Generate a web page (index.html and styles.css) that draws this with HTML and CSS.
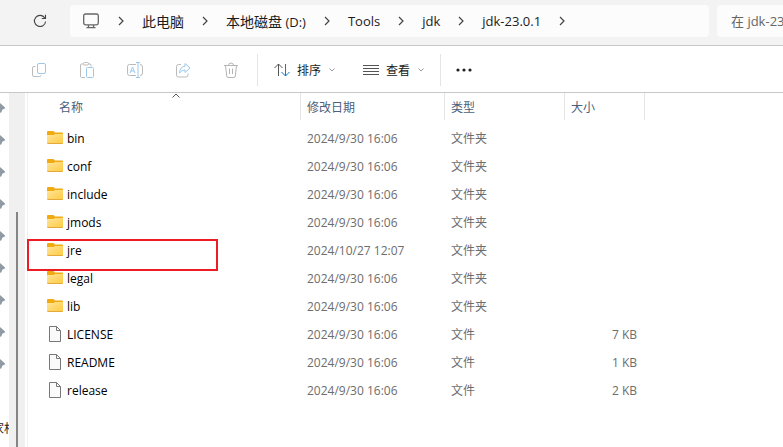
FILE: index.html
```
<!DOCTYPE html>
<html lang="zh-CN">
<head>
    <meta charset="UTF-8">
    <meta name="viewport" content="width=device-width, initial-scale=1.0">
    <title>jdk-23.0.1</title>
    <link rel="stylesheet" href="styles.css">
</head>
<body>
    <!-- shared icons -->
    <svg class="sprite" aria-hidden="true">
        <symbol id="chevron" viewBox="0 0 8 10"><path d="M2 1 L6 5 L2 9" fill="none" stroke="#444" stroke-width="1.2"/></symbol>
        <symbol id="down" viewBox="0 0 8 6"><path d="M1.500 1.500 L4 4 L6.500 1.500" fill="none" stroke="#999" stroke-width="1"/></symbol>
        <symbol id="folder" viewBox="0 0 16 16">
            <path d="M0 2 Q0 1 1 1 H6.500 L8 2.500 H15 Q16 2.500 16 3.500 V8 H0 Z" fill="#f0ab12"/>
            <path d="M0 5 H6.500 L8 4 H16 V13 Q16 14 15 14 H1 Q0 14 0 13 Z" fill="url(#folderFill)"/>
            <path d="M.5 13.500 H15.500" stroke="#e3a93a" stroke-width="1"/>
        </symbol>
        <symbol id="file" viewBox="0 0 16 16">
            <path d="M2.500 .5 H9.500 L13.500 4.500 V15.500 H2.500 Z" fill="#fafafa" stroke="#777"/>
            <path d="M9.500 .5 V4.500 H13.500" fill="none" stroke="#777"/>
        </symbol>
        <symbol id="pin" viewBox="0 0 12 12"><path d="M6 1 L11 5.500 V6.500 L8.500 7.500 L7 11 L5.500 10 L3 8 L0 11 L2 7 L1 5 L5 3.500 Z" fill="#8f9aa3"/></symbol>
        <defs>
            <linearGradient id="folderFill" x1="0" y1="0" x2="1" y2="1">
                <stop offset="0" stop-color="#ffe69b"/>
                <stop offset="1" stop-color="#fdc93f"/>
            </linearGradient>
        </defs>
    </svg>

    <header class="top-bar">
        <button type="button" class="refresh" aria-label="刷新">
            <svg width="14" height="14" viewBox="0 0 14 14" fill="none" stroke="#444" stroke-width="1.1"><path d="M11.800 4 A5.600 5.600 0 1 0 12.600 7.500"/><path d="M12.500 .8 V4.500 H8.800"/></svg>
        </button>
        <nav class="address-bar" aria-label="地址">
            <svg class="monitor" width="16" height="16" viewBox="0 0 16 16" fill="none" stroke="#666" stroke-width="1.300"><rect x=".7" y="1" width="14.600" height="10.800" rx="1.800"/><path d="M5.500 12 V14.500 M10.500 12 V14.500 M3.500 14.700 H12.500"/></svg>
            <svg class="chevron"><use href="#chevron"/></svg>
            <a href="#" class="cjk">此电脑</a>
            <svg class="chevron"><use href="#chevron"/></svg>
            <a href="#"><span class="cjk">本地磁盘</span> (D:)</a>
            <svg class="chevron"><use href="#chevron"/></svg>
            <a href="#">Tools</a>
            <svg class="chevron"><use href="#chevron"/></svg>
            <a href="#">jdk</a>
            <svg class="chevron"><use href="#chevron"/></svg>
            <a href="#">jdk-23.0.1</a>
            <svg class="chevron"><use href="#chevron"/></svg>
        </nav>
        <input type="text" class="search" placeholder="在 jdk-23.0.1 中搜索" aria-label="搜索">
    </header>

    <div class="toolbar">
        <div class="tools">
            <button type="button" class="tool" aria-label="复制" disabled>
                <svg width="16" height="16" viewBox="0 0 16 16" fill="none"><path d="M4.500 4.500 H3 Q1.500 4.500 1.500 6 V13 Q1.500 14.500 3 14.500 H8.500 Q10 14.500 10 13.300" stroke="#bbb"/><rect x="6.500" y="1.500" width="8" height="10" rx="1.500" stroke="#9bc9ee"/></svg>
            </button>
            <button type="button" class="tool" aria-label="粘贴" disabled>
                <svg width="16" height="16" viewBox="0 0 16 16" fill="none"><path d="M6 15.500 H2.500 Q1.500 15.500 1.500 14.500 V3 Q1.500 2 2.500 2 H11 Q12 2 12 3 V4.500" stroke="#bbb"/><rect x="4.500" y=".5" width="5" height="2.500" rx="1" fill="#fff" stroke="#bbb"/><rect x="7.500" y="5.500" width="7" height="10" rx="1" stroke="#9bc9ee"/></svg>
            </button>
            <button type="button" class="tool" aria-label="重命名" disabled>
                <svg width="16" height="16" viewBox="0 0 16 16" fill="none"><path d="M9 2.500 H2.500 Q.5 2.500 .5 4.500 V11.500 Q.5 13.500 2.500 13.500 H9 M13 2.500 Q15.500 2.500 15.500 5 V11 Q15.500 13.500 13 13.500" stroke="#bbb"/><path d="M3 11 L5.500 5 L8 11 M4 9 H7 M11 .5 V15.500 M9 .5 H13 M9 15.500 H13" stroke="#9bc9ee"/></svg>
            </button>
            <button type="button" class="tool" aria-label="共享" disabled>
                <svg width="16" height="16" viewBox="0 0 16 16" fill="none"><path d="M6 2.500 H3.500 Q1.500 2.500 1.500 4.500 V13 Q1.500 15 3.500 15 H11 Q13 15 13 13 V11.500" stroke="#bbb"/><path d="M10 1.500 L15 6 L10 10.500 V8 Q6.500 8 4.500 11 Q4.800 5 10 4.300 Z" stroke="#9bc9ee" stroke-linejoin="round"/></svg>
            </button>
            <button type="button" class="tool" aria-label="删除" disabled>
                <svg width="16" height="16" viewBox="0 0 16 16" fill="none" stroke="#b5b5b5"><path d="M1 3.500 H15 M5.500 3.500 Q5.500 1 8 1 Q10.500 1 10.500 3.500 M2.500 3.500 L3.700 14 Q3.900 15.500 5 15.500 H11 Q12.100 15.500 12.300 14 L13.500 3.500 M6.500 6.500 V12 M9.500 6.500 V12"/></svg>
            </button>
        </div>
        <div class="menus">
            <button type="button" class="menu">
                <svg width="16" height="14" viewBox="0 0 16 14" fill="none"><path d="M4.500 13 V1 M.5 5 L4.500 1 L8.500 5" stroke="#555"/><path d="M11.500 1 V13 M7.500 9 L11.500 13 L15.500 9" stroke="#0f7ad1"/></svg>
                排序
                <svg class="down"><use href="#down"/></svg>
            </button>
            <button type="button" class="menu">
                <svg width="16" height="14" viewBox="0 0 16 14" stroke="#555"><path d="M0 2.500 H16 M0 5.500 H16 M0 8.500 H16 M0 11.500 H16"/></svg>
                查看
                <svg class="down"><use href="#down"/></svg>
            </button>
        </div>
        <button type="button" class="more" aria-label="更多">
            <svg width="18" height="4" viewBox="0 0 18 4" fill="#222"><circle cx="3" cy="2" r="1.600"/><circle cx="9" cy="2" r="1.600"/><circle cx="15" cy="2" r="1.600"/></svg>
        </button>
    </div>

    <div class="content">
        <aside class="sidebar">
            <svg class="pin"><use href="#pin"/></svg>
            <svg class="pin"><use href="#pin"/></svg>
            <svg class="pin"><use href="#pin"/></svg>
            <svg class="pin"><use href="#pin"/></svg>
            <svg class="pin"><use href="#pin"/></svg>
            <svg class="pin"><use href="#pin"/></svg>
            <svg class="pin"><use href="#pin"/></svg>
            <svg class="pin"><use href="#pin"/></svg>
            <svg class="pin"><use href="#pin"/></svg>
            <span class="side-label">家相</span>
        </aside>
        <div class="scrollbar"><div class="thumb"></div></div>
        <main class="files">
            <table class="file-table">
                <thead>
                    <tr>
                        <th class="col-name">名称<svg class="sort-mark" viewBox="0 0 8 5"><path d="M.5 4.500 L4 1 L7.500 4.500" fill="none" stroke="#555"/></svg></th>
                        <th class="col-date">修改日期</th>
                        <th class="col-type">类型</th>
                        <th class="col-size">大小</th>
                        <th class="col-rest"></th>
                    </tr>
                </thead>
                <tbody>
                    <tr><td><span class="name"><svg class="icon"><use href="#folder"/></svg>bin</span></td><td>2024/9/30 16:06</td><td>文件夹</td><td></td></tr>
                    <tr><td><span class="name"><svg class="icon"><use href="#folder"/></svg>conf</span></td><td>2024/9/30 16:06</td><td>文件夹</td><td></td></tr>
                    <tr><td><span class="name"><svg class="icon"><use href="#folder"/></svg>include</span></td><td>2024/9/30 16:06</td><td>文件夹</td><td></td></tr>
                    <tr><td><span class="name"><svg class="icon"><use href="#folder"/></svg>jmods</span></td><td>2024/9/30 16:06</td><td>文件夹</td><td></td></tr>
                    <tr class="marked"><td><span class="name"><svg class="icon"><use href="#folder"/></svg>jre</span></td><td>2024/10/27 12:07</td><td>文件夹</td><td></td></tr>
                    <tr><td><span class="name"><svg class="icon"><use href="#folder"/></svg>legal</span></td><td>2024/9/30 16:06</td><td>文件夹</td><td></td></tr>
                    <tr><td><span class="name"><svg class="icon"><use href="#folder"/></svg>lib</span></td><td>2024/9/30 16:06</td><td>文件夹</td><td></td></tr>
                    <tr><td><span class="name"><svg class="icon"><use href="#file"/></svg>LICENSE</span></td><td>2024/9/30 16:06</td><td>文件</td><td>7 KB</td></tr>
                    <tr><td><span class="name"><svg class="icon"><use href="#file"/></svg>README</span></td><td>2024/9/30 16:06</td><td>文件</td><td>1 KB</td></tr>
                    <tr><td><span class="name"><svg class="icon"><use href="#file"/></svg>release</span></td><td>2024/9/30 16:06</td><td>文件</td><td>2 KB</td></tr>
                </tbody>
            </table>
        </main>
    </div>
</body>
</html>
```
FILE: styles.css
```
*,
*::before,
*::after {
    box-sizing: border-box;
}

body {
    margin: 0;
    height: 100vh;
    display: flex;
    flex-direction: column;
    overflow: hidden;
    background-color: #fff;
    color: #1b1b1b;
    font-family: "Open Sans", "Noto Sans CJK SC", sans-serif;
    font-size: 12px;
}

svg {
    display: block;
    flex-shrink: 0;
}

button {
    padding: 0;
    border: none;
    background: none;
    color: inherit;
    font: inherit;
}

.sprite {
    position: absolute;
    width: 0;
    height: 0;
}

/* Address row */
.top-bar {
    display: flex;
    gap: 8px;
    padding: 5px 0 8px;
    background-color: #f3f3f3;
    border-bottom: 1px solid #c8c8c8;
}

.refresh {
    display: flex;
    align-items: center;
    width: 62px;
    padding-left: 33px;
}

.address-bar {
    flex: 1;
    display: flex;
    align-items: center;
    min-width: 0;
    height: 32px;
    padding-left: 13px;
    background-color: #fcfcfc;
    border-radius: 4px;
    font-size: 13px;
    white-space: nowrap;
}

.monitor {
    margin-right: 1px;
}

.address-bar a {
    color: #1b1b1b;
    text-decoration: none;
}

.cjk {
    font-size: 14px;
}

.chevron {
    width: 8px;
    height: 10px;
    margin: 0 17px;
}

.search {
    width: 66px;
    padding: 0 0 0 14px;
    border: none;
    border-radius: 4px 0 0 4px;
    background-color: #fcfcfc;
    font-family: inherit;
    font-size: 13px;
}

.search::placeholder {
    color: #666;
}

/* Command bar */
.toolbar {
    display: flex;
    align-items: center;
    height: 47px;
    padding-top: 1px;
    flex-shrink: 0;
    border-bottom: 1px solid #c8c8c8;
}

.tools,
.menus {
    display: flex;
    align-items: center;
    height: 32px;
    border-right: 1px solid #e5e5e5;
}

.tools {
    gap: 32px;
    padding: 0 18px 0 31px;
}

.menus {
    gap: 27px;
    padding: 0 15px 0 16px;
}

.menu {
    display: flex;
    align-items: center;
    gap: 7px;
}

.down {
    width: 8px;
    height: 6px;
}

.more {
    padding: 8px 14px;
}

/* File area */
.content {
    flex: 1;
    display: flex;
    min-height: 0;
}

.sidebar {
    display: flex;
    flex-direction: column;
    gap: 20px;
    width: 9px;
    padding-top: 9px;
    overflow: hidden;
}

.pin {
    width: 12px;
    height: 12px;
    margin-left: -6px;
}

.side-label {
    margin: 30px 0 0 -8px;
    line-height: 18px;
    white-space: nowrap;
}

.scrollbar {
    display: flex;
    justify-content: center;
    width: 16px;
    padding-top: 119px;
    background-color: #f0f0f0;
}

.thumb {
    width: 2px;
    background-color: #858585;
}

.files {
    flex: 1;
    min-width: 0;
    margin-left: 2px;
    border-left: 1px solid #f0f0f0;
}

.file-table {
    width: 100%;
    table-layout: fixed;
    border-collapse: separate;
    border-spacing: 0;
}

.file-table th {
    position: relative;
    height: 27px;
    padding: 0 6px;
    border-right: 1px solid #e5e5e5;
    color: #4c607a;
    font-weight: normal;
    text-align: left;
}

.file-table th.col-name {
    width: 273px;
    padding-left: 31px;
}

.col-date {
    width: 144px;
}

.col-type {
    width: 120px;
}

.col-size {
    width: 80px;
}

.file-table th.col-rest {
    border-right: none;
}

.sort-mark {
    position: absolute;
    top: 0;
    left: 50%;
    width: 8px;
    height: 5px;
    margin-left: 8px;
}

.file-table td {
    height: 28px;
    padding: 0 8px 0 6px;
    color: #6d6d6d;
}

/* space between the header and the first row */
.file-table tbody::before {
    content: "";
    display: block;
    height: 4px;
}

.file-table td:first-child {
    position: relative;
    padding-left: 19px;
    color: #000;
}

.file-table td:nth-child(4) {
    text-align: right;
}

.name {
    display: flex;
    align-items: center;
    gap: 4px;
}

.icon {
    width: 16px;
    height: 16px;
}

/* Red frame round the marked folder */
.marked td:first-child::after {
    content: "";
    position: absolute;
    top: 3px;
    left: -1px;
    width: 191px;
    height: 32px;
    border: 2px solid #ed1c24;
}
```
